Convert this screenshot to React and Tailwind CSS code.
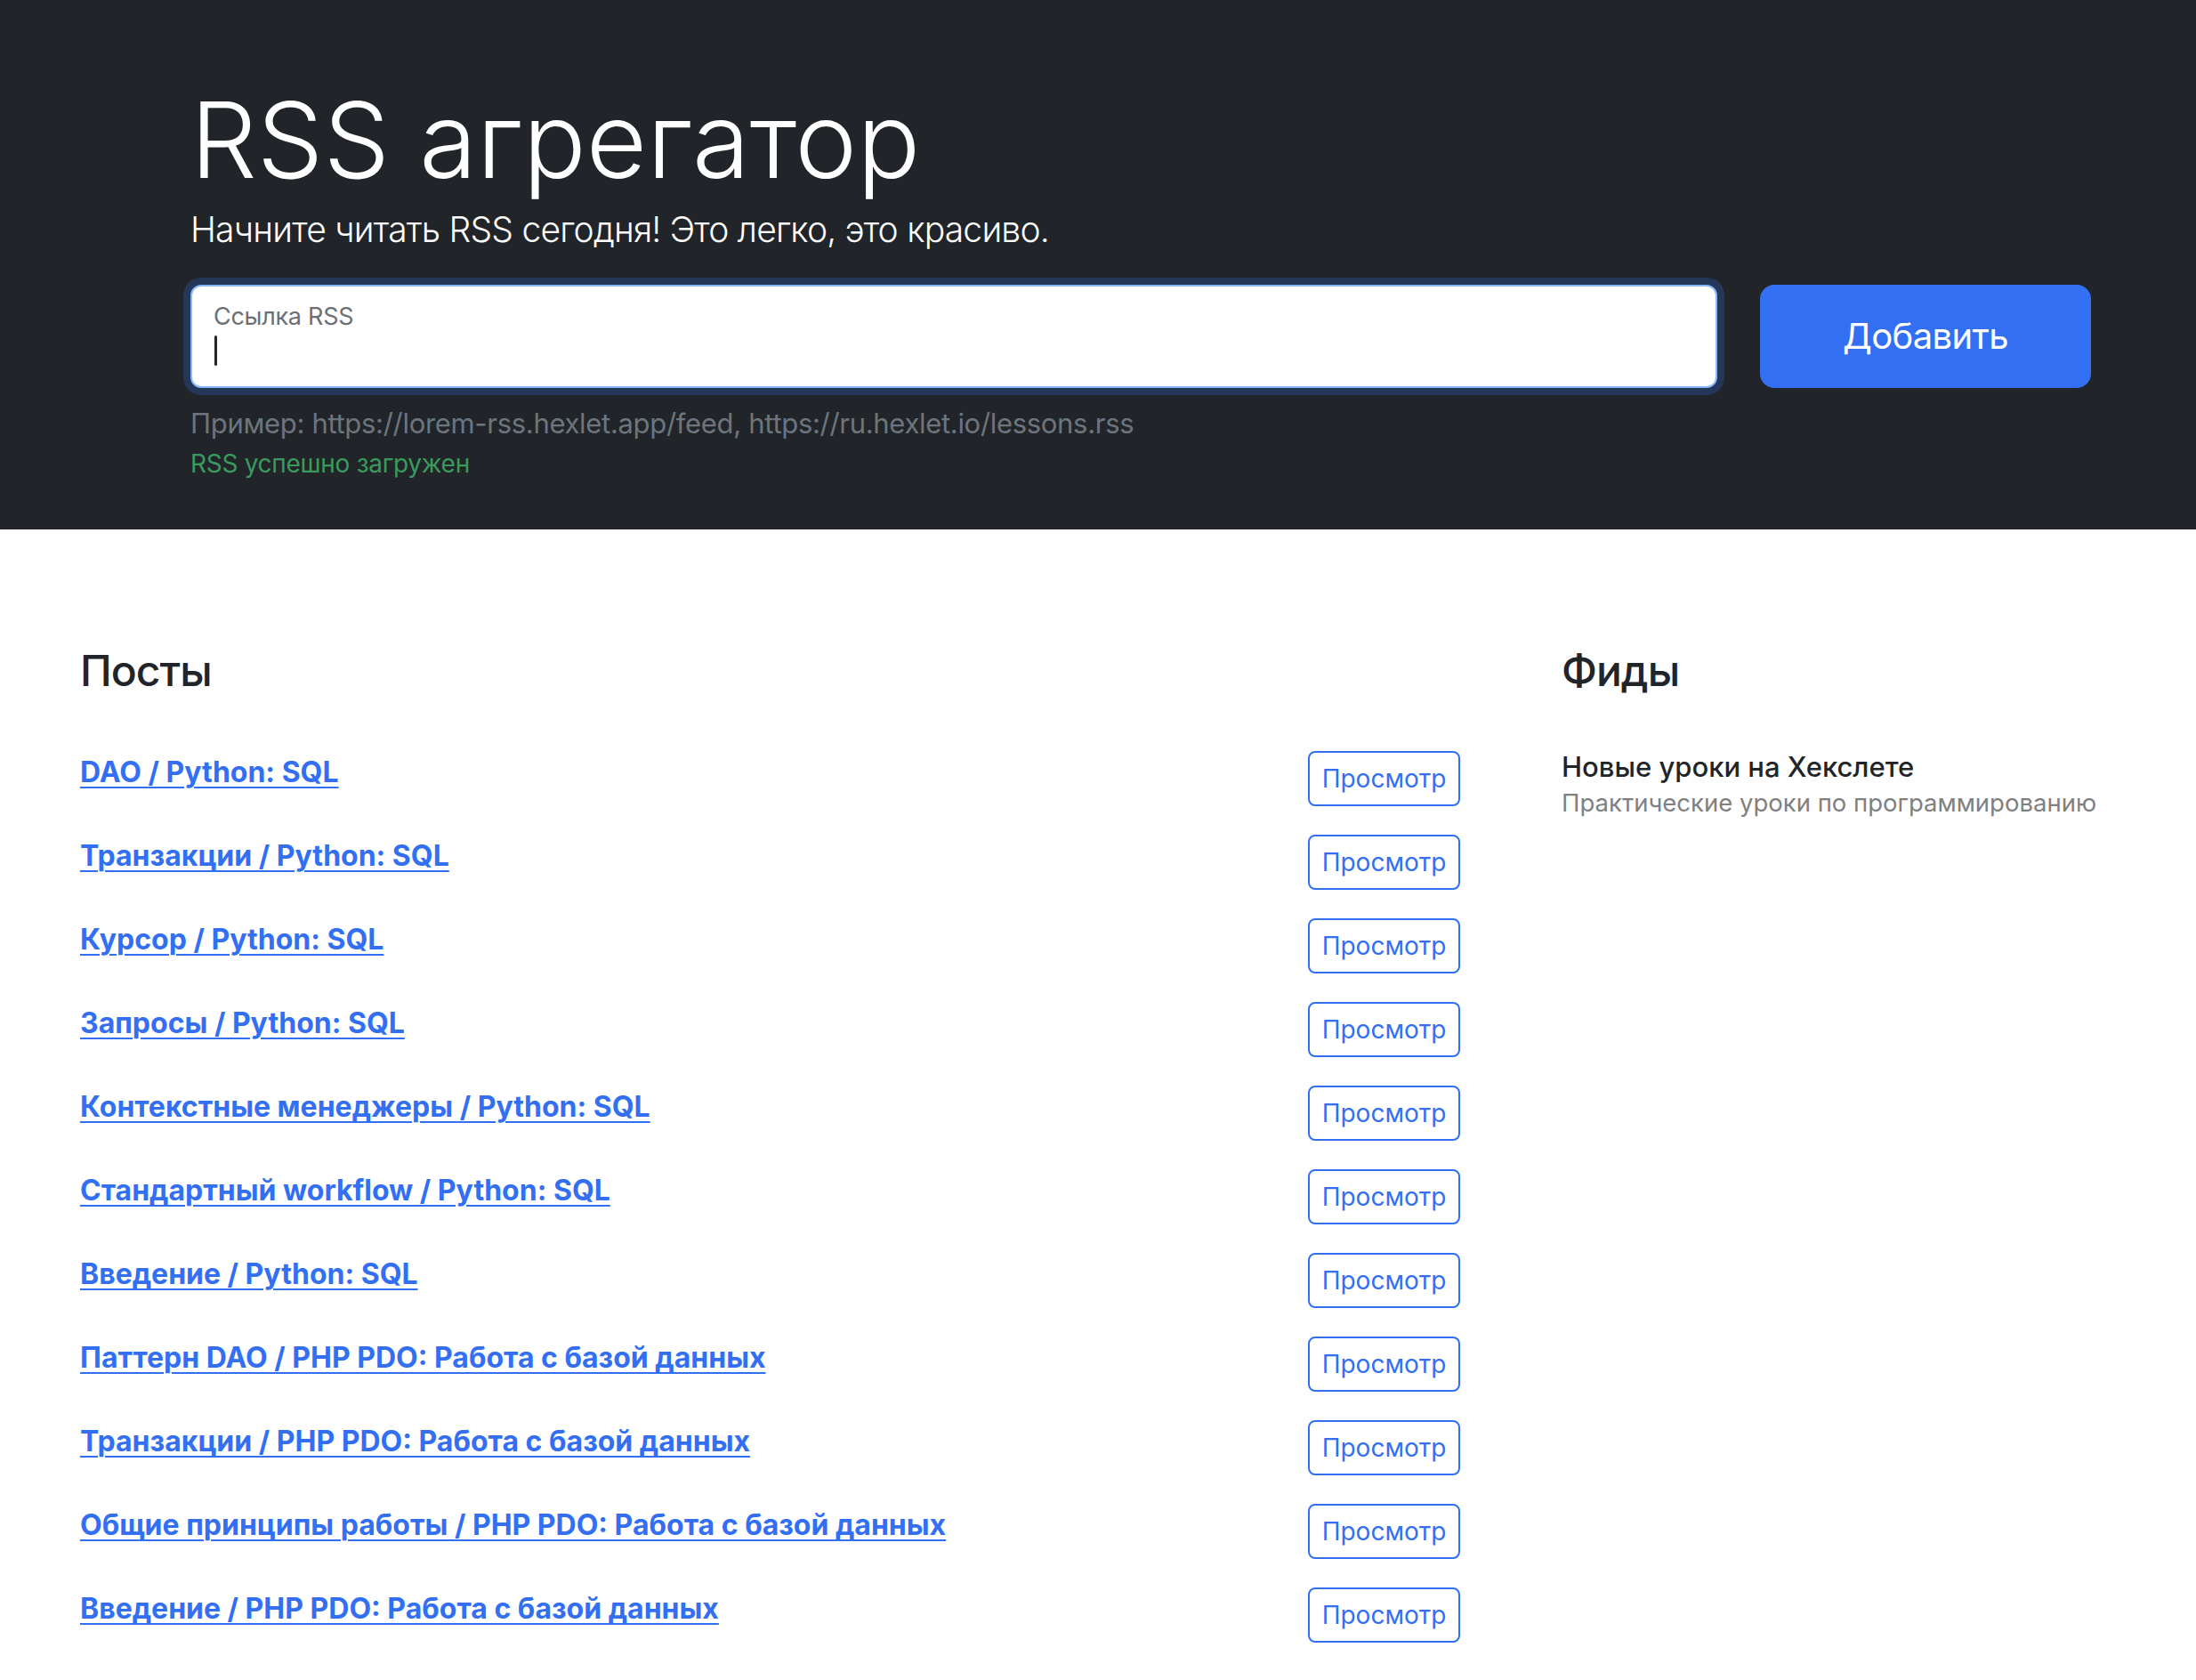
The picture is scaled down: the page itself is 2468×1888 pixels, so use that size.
import React from 'react';

const posts = [
    'DAO / Python: SQL',
    'Транзакции / Python: SQL',
    'Курсор / Python: SQL',
    'Запросы / Python: SQL',
    'Контекстные менеджеры / Python: SQL',
    'Стандартный workflow / Python: SQL',
    'Введение / Python: SQL',
    'Паттерн DAO / PHP PDO: Работа с базой данных',
    'Транзакции / PHP PDO: Работа с базой данных',
    'Общие принципы работы / PHP PDO: Работа с базой данных',
    'Введение / PHP PDO: Работа с базой данных',
];

const App = () => {
    return (
        <div className="min-h-screen bg-white font-['Inter',sans-serif]">
            {/* Header with form */}
            <header className="bg-[#212529] pt-[86px] pb-[95px] pl-[214px] pr-[118px]">
                <h1 className="text-[118px] leading-[142px] font-light text-white">RSS агрегатор</h1>
                <p className="text-[39px] leading-[60px] font-light text-white tracking-[-0.02em] mb-[32px]">
                    Начните читать RSS сегодня! Это легко, это красиво.
                </p>
                <form className="flex gap-[48px]" onSubmit={(e) => e.preventDefault()}>
                    <div className="relative flex-1 h-[116px] rounded-[12px] border-2 border-[#86b7fe] bg-white ring-8 ring-[#253759]">
                        <span className="absolute left-[24px] top-[18px] text-[27px] leading-[32px] tracking-[-0.01em] text-[#6c6f73]">Ссылка RSS</span>
                        <span className="absolute left-[25px] top-[55px] w-[3px] h-[34px] rounded-sm bg-[#212529]" />
                    </div>
                    <button className="w-[372px] h-[116px] rounded-[16px] bg-[#336ff3] text-white text-[40px] leading-[60px] tracking-[-0.015em]">
                        Добавить
                    </button>
                </form>
                <div className="relative">
                    <p className="mt-[16px] text-[31px] leading-[48px] tracking-[-0.01em] text-[#6c757d]">
                        Пример: https://lorem-rss.hexlet.app/feed, https://ru.hexlet.io/lessons.rss
                    </p>
                    <p className="absolute left-0 top-full text-[28px] leading-[42px] tracking-[-0.01em] text-[#3a9a5e]">RSS успешно загружен</p>
                </div>
            </header>

            {/* Posts and feeds */}
            <main className="flex pl-[90px] pt-[130px] pb-[40px]">
                <section className="w-[1551px]">
                    <h2 className="text-[48px] leading-[58px] font-medium tracking-[-0.02em] text-[#212529] mb-[45px]">Посты</h2>
                    <ul>
                        {posts.map((title) => (
                            <li key={title} className="flex justify-between items-start py-[16px]">
                                <a href="#" className="text-[32px] leading-[48px] font-bold text-[#336ff3] underline decoration-2 underline-offset-[5px]">
                                    {title}
                                </a>
                                <button className="w-[171px] h-[62px] rounded-[8px] border-2 border-[#336ff3] text-[28px] leading-[42px] text-[#336ff3]">
                                    Просмотр
                                </button>
                            </li>
                        ))}
                    </ul>
                </section>
                <section className="ml-[114px]">
                    <h2 className="text-[48px] leading-[58px] font-medium tracking-[-0.02em] text-[#212529] mb-[60px]">Фиды</h2>
                    <h3 className="text-[31px] leading-[38px] font-medium text-[#212529]">Новые уроки на Хекслете</h3>
                    <p className="text-[27.5px] leading-[42px] text-[#808080]">Практические уроки по программированию</p>
                </section>
            </main>
        </div>
    );
};

export default App;
